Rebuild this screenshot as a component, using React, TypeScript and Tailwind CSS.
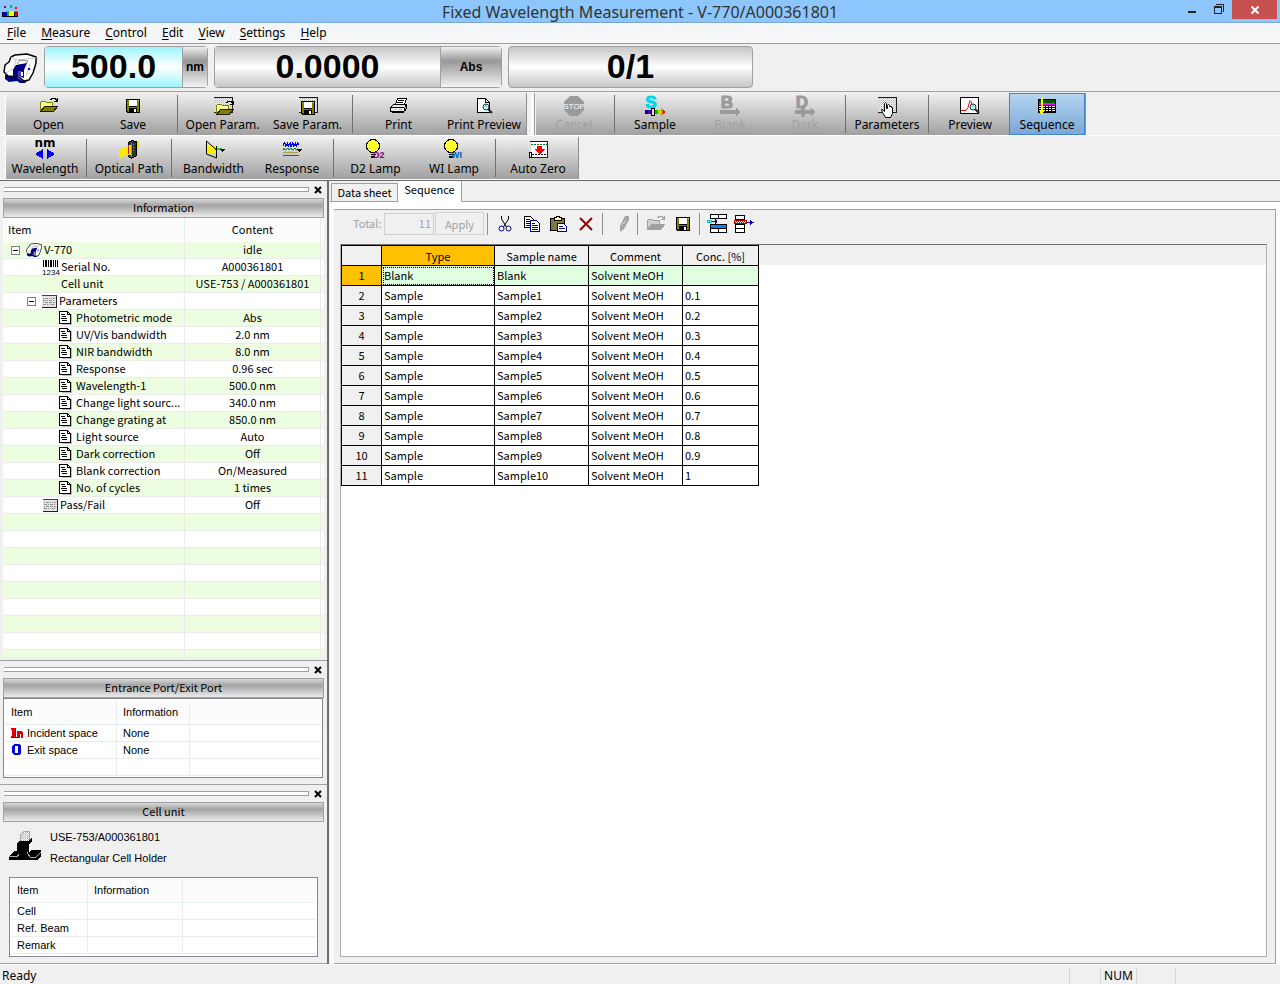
import React from 'react';

type IconProps = { children: React.ReactNode; w?: number; h?: number };

const Icon: React.FC<IconProps> = ({ children, w = 20, h = 20 }) => (
  <svg width={w} height={h} viewBox={`0 0 ${w} ${h}`} shapeRendering="crispEdges" className="shrink-0 overflow-visible" aria-hidden="true">
    {children}
  </svg>
);

const Dots: React.FC = () => (
  <defs>
    <pattern id="dots" width="2" height="2" patternUnits="userSpaceOnUse">
      <rect width="2" height="2" fill="#f4f4f4" />
      <rect width="1" height="1" fill="#b0b0b0" />
      <rect x="1" y="1" width="1" height="1" fill="#d0d0d0" />
    </pattern>
  </defs>
);

const FolderShape: React.FC<{ gray?: boolean }> = ({ gray }) => (
  <>
    <path d="M1.5 15.5v-9l1-1h4l1 1h6v4h-8z" fill={gray ? '#d0d0d0' : '#ffff90'} stroke={gray ? '#a0a0a0' : '#808000'} />
    <path d="M1.5 15.5l4-5h13l-4 5z" fill={gray ? '#a0a0a0' : '#808000'} stroke={gray ? '#a0a0a0' : '#1a1a00'} />
    <path d="M11 3.5h1v-1h4v1h1v1h1M18.5 2v4M15 5.5h4" fill="none" stroke={gray ? '#a0a0a0' : '#000'} />
  </>
);

const FloppyShape: React.FC = () => (
  <>
    <path d="M0 0h14v14h-13l-1-1z" fill="#000" />
    <path d="M1 1h2v7h8v-7h2v12h-2v-4h-8v4h-1l-1-1z" fill="#808000" />
    <path d="M3 1h8v6h-8z" fill="#fff" />
    <path d="M8 10h2v3h-2z" fill="#fff" />
    <path d="M12 1h1v1h-1z" fill="#fff" />
  </>
);

const PanelShape: React.FC = () => (
  <>
    <Dots />
    <path d="M1 1h18v15h-18z" fill="url(#dots)" />
    <path d="M1 1h18v1h-18z" fill="#0000f0" />
    <path d="M19 1h1v16h-19v-1h18z" fill="#222" />
  </>
);

const OpenIcon = () => <Icon><FolderShape /></Icon>;

const SaveIcon = () => (
  <Icon><g transform="translate(3 3)"><FloppyShape /></g></Icon>
);

const OpenParamIcon = () => (
  <Icon>
    <PanelShape />
    <g transform="translate(2 3)"><FolderShape /></g>
  </Icon>
);

const SaveParamIcon = () => (
  <Icon>
    <PanelShape />
    <g transform="translate(3 5)"><FloppyShape /></g>
  </Icon>
);

const PrintIcon = () => (
  <Icon>
    <path d="M6.5 8.5l2-6h9l-2 6z" fill="#fff" stroke="#000" />
    <path d="M9 4.5h6M8 6.5h6" stroke="#000" />
    <path d="M1.5 11.5l3-3h13l-2 3zM1.5 11.5h14v4h-14z" fill="#e8e8e8" stroke="#000" />
    <path d="M15.5 11.5l2-3v4l-2 3" fill="#999" stroke="#000" />
    <path d="M10 13h3v1h-3z" fill="#e0d000" />
    <path d="M3.5 15.5v1h11v-1" fill="#fff" stroke="#000" />
  </Icon>
);

const Magnifier: React.FC = () => (
  <g shapeRendering="auto">
    <path d="M14 13l4 4" stroke="#222" strokeWidth="2" />
    <circle cx="12" cy="11" r="3" fill="#c0f4f8" stroke="#333" />
    <path d="M11 10l2 0" stroke="#00c8d8" />
  </g>
);

const PreviewPageIcon = () => (
  <Icon>
    <path d="M3.5 2.5h8l4 4v10h-12z" fill="#fff" stroke="#000" />
    <path d="M11.5 2.5v4h4" fill="none" stroke="#000" />
    <Magnifier />
  </Icon>
);

const StopIcon = () => (
  <Icon w={22} h={22}>
    <path d="M7 1h8l6 6v8l-6 6h-8l-6-6v-8z" fill="#9a9a9a" shapeRendering="auto" />
    <text x="11" y="14" textAnchor="middle" fontFamily="Liberation Sans, sans-serif" fontSize="8" fill="#fff">STOP</text>
  </Icon>
);

const LetterArrowIcon: React.FC<{ letter: string; color: string; rainbow?: boolean; slot?: boolean }> = ({ letter, color, rainbow, slot }) => (
  <Icon w={22} h={22}>
    <text x={rainbow ? 7 : 8} y="13" textAnchor="middle" fontFamily="Liberation Sans, sans-serif" fontSize="17" fontWeight="bold" fill={color} stroke={color}>{letter}</text>
    {rainbow ? (
      <>
        <path d="M1 15h3v4h-3z" fill="#000080" />
        <path d="M4 15h3v4h-3z" fill="#6000a0" />
        <path d="M11 15h3v4h-3z" fill="#00c000" />
        <path d="M14 15h3v4h-3z" fill="#b8e000" />
        <path d="M17 13l4 4-4 4z" fill="#ff8000" />
        <path d="M19 15l2 2-2 2z" fill="#e00000" />
        <path d="M7.5 13.5h3v7h-3z" fill="#e0e0e0" stroke="#000" />
      </>
    ) : (
      <>
        <path d="M1 15h16v-2l4 4-4 4v-2h-16z" fill={color} />
        {slot && <path d="M7 13h4v9h-4z" fill={color} />}
      </>
    )}
  </Icon>
);

const ParametersIcon = () => (
  <Icon>
    <PanelShape />
    <path
      d="M7.5 7.5l1-1 1 1v5h1v-3l1-1 1 1v1h2v1h1v6l-2 4h-5l-3-5-1-3h1l2 2z"
      fill="#fff"
      stroke="#000"
      shapeRendering="auto"
    />
  </Icon>
);

const PreviewIcon = () => (
  <Icon>
    <path d="M.5 1.500h18v16h-18z" fill="#fff" stroke="#000" />
    <path d="M1 14.500h5l2-3 2-7 1 1 2 7 4 2" fill="none" stroke="#f00" shapeRendering="auto" />
    <g transform="translate(1 0)"><Magnifier /></g>
  </Icon>
);

const SequenceIcon = () => (
  <Icon>
    <path d="M1 3h18v14h-18z" fill="#000" />
    <path d="M2 4h16v3h-16z" fill="#006000" />
    <path d="M2 7h16v2h-16z" fill="#ff00ff" />
    {[10, 12, 14].map((y) => (
      <path key={y} d={`M2 ${y}h2v1h-2zM5 ${y}h3v1h-3zM9 ${y}h2v1h-2zM12 ${y}h2v1h-2zM15 ${y}h3v1h-3z`} fill="#fff" />
    ))}
    <path d="M4 1h2v13h2l-3 5-3-5h2z" fill="#ffff00" />
  </Icon>
);

const WavelengthIcon = () => (
  <Icon w={22} h={22}>
    <text x="11" y="8" textAnchor="middle" fontFamily="DejaVu Sans, sans-serif" fontSize="12" fontWeight="bold" fill="#000">nm</text>
    <path d="M1 15l8-5v10zM21 15l-8-5v10z" fill="#0000f0" />
  </Icon>
);

const OpticalPathIcon = () => (
  <Icon w={22} h={22}>
    <path d="M1 11l9-4v8l-9 5z" fill="#ffe800" />
    <path d="M16 4l5-2v6l-5 3z" fill="#e8d820" />
    <path d="M10.500 3.500l3-2 5 1v14l-5 3-3-2z" fill="#303030" stroke="#000" />
    <path d="M9 6h4v10h-4z" fill="#ffe800" />
    <path d="M10 6h1v9h-1z" fill="#d02020" />
    <path d="M13 4h1v14h-1zM15 5h1v1h-1zM15 8h1v1h-1zM15 11h1v1h-1z" fill="#888" />
  </Icon>
);

const BandwidthIcon = () => (
  <Icon>
    <path d="M1 7l10-2 2 4-2 4-9 1z" fill="#fff000" />
    <path d="M11 8h7v2h-7z" fill="#20d020" />
    <path d="M2.500 1v13M2.500 1l10 9M12.500 6v12l-10-4" fill="none" stroke="#000" shapeRendering="auto" />
    <path d="M15 9h6l-3 3z" fill="#000" />
  </Icon>
);

const ResponseIcon = () => (
  <Icon>
    <path
      d="M1 3h1v3h-1zM2 2h1v2h-1zM3 3h1v4h-1zM4 4h1v2h-1zM5 2h1v4h-1zM6 4h1v3h-1zM7 3h1v2h-1zM8 2h1v5h-1zM9 4h1v3h-1zM10 2h1v3h-1zM11 3h1v4h-1zM12 4h1v2h-1zM13 2h1v4h-1zM14 4h1v3h-1zM15 2h1v3h-1zM16 3h1v2h-1z"
      fill="#0000f0"
    />
    <path d="M1 10l1-2 1 2 2-1 1-1 1 2 2-2 1 2 2-1 1-1 1 2 2-1" fill="none" stroke="#008020" shapeRendering="auto" />
    <path d="M1 13l2-1 2 1 2-1 2 1 2-1 2 1 3-1" fill="none" stroke="#a09030" shapeRendering="auto" />
    <path d="M1 15h16v1h-16z" fill="#f00" />
    <path d="M15 9h5l-2.500 3z" fill="#000" />
  </Icon>
);

const LampIcon: React.FC<{ tag: string; color: string }> = ({ tag, color }) => (
  <Icon w={22} h={22}>
    <circle cx="8" cy="7" r="6.500" fill="#ffff30" stroke="#000" />
    <path d="M6 13h5v1h-5zM6 15h5v1h-5zM6 17h4v2h-4z" fill="#000" />
    <path d="M6 5h1v1h-1zM9 4h1v1h-1zM8 8h1v1h-1z" fill="#fff" />
    <text x="8" y="19" fontFamily="Liberation Sans, sans-serif" fontSize="9" fontWeight="bold" fill={color}>{tag}</text>
  </Icon>
);

const AutoZeroIcon = () => (
  <Icon>
    <path d="M3 2h16v15h-16z" fill="#fff" />
    <path d="M2 1h17v1h-17z" fill="#0000f0" />
    <path d="M19 1h1v17h-18v-1h17z" fill="#222" />
    <path d="M3 4.500h16" stroke="#008020" strokeDasharray="2 1" />
    <path d="M9 6h5v3h3l-5 5-6-5h3z" fill="#f00" />
    <path d="M4 14.500h15" stroke="#000" strokeDasharray="2 1" />
    <path d="M1.500 12.500h2v5h-2z" fill="#fff" stroke="#000" />
  </Icon>
);

const DeviceIcon: React.FC<{ size: number }> = ({ size }) => (
  <svg width={size} height={size} viewBox="0 0 34 34" className="shrink-0" aria-hidden="true">
    <path d="M2 24l10 1 8 5 6-2-4 4h-5l-3-2-8 1-4-3z" fill="#000080" />
    <path d="M1 21l1-7 4-3 2-5 4-2 12-1 9 3v6l-3 10-4 7-5 1-5-4-11-1z" fill="#fff" stroke="#000" strokeWidth="1.500" strokeLinejoin="round" />
    <path d="M8 6l5 3-2 8-8 5M13 9l10-1 10-1M27 13l-4 12" fill="none" stroke="#c4c4c4" />
    <path d="M14 13l3-4 8 1-2 3" fill="none" stroke="#888" />
    <path d="M13 14l11-2-3 7v8l-5-2-6 1v-7z" fill="#000080" />
    <path d="M15 20h4v3l-4 3z" fill="#4040c0" />
    <path d="M18 21h2v4h-2z" fill="#fff" />
    <path d="M25 17h2v2h-2z" fill="#0000ff" />
  </svg>
);

const AppIcon = () => (
  <Icon w={16} h={16}>
    <path d="M2 2h2v2h-2z" fill="#800080" />
    <path d="M8 1h2v3h-2z" fill="#00d000" />
    <path d="M13 3h2v2h-2z" fill="#f00" />
    <path d="M0 8h16v5h-16z" fill="#000" />
    <path d="M1 8h4v4h-4z" fill="#0000d0" />
    <path d="M5 7h3v5h-3z" fill="#00c020" />
    <path d="M7 7h5v5h-5z" fill="#ff0" />
    <path d="M13 7h2v5h-2z" fill="#f00" />
  </Icon>
);

const DocIcon = () => (
  <Icon w={13} h={14}>
    <path d="M3 3h10v11h-10z" fill="#bbb" />
    <path d="M.5.500h8l3 3v9h-11z" fill="#fff" stroke="#000" />
    <path d="M8.500.500v3h3M2 3.500h4M3 5.500h4M2 7.500h6M3 9.500h5" fill="none" stroke="#000" />
  </Icon>
);

const GridIcon = () => (
  <Icon w={15} h={13}>
    <Dots />
    <path d="M0 1h14v11h-14z" fill="#e4e4e4" />
    <path d="M1 3h1v1h-1zM3 3h3v1h-3zM7 3h1v1h-1zM9 3h1v1h-1zM11 3h2v1h-2zM1 5h3v1h-3zM5 5h1v1h-1zM7 5h3v1h-3zM11 5h1v1h-1zM1 7h1v1h-1zM3 7h3v1h-3zM7 7h3v1h-3zM11 7h2v1h-2zM1 9h3v1h-3zM5 9h1v1h-1zM7 9h1v1h-1zM9 9h3v1h-3z" fill="#909090" />
    <path d="M0 0h15v1h-15z" fill="#3030d0" />
    <path d="M14 1h1v12h-15v-1h14z" fill="#222" />
  </Icon>
);

const BarcodeIcon = () => (
  <Icon w={16} h={15}>
    <path d="M0 0h1v7h-1zM2 0h2v7h-2zM5 0h1v7h-1zM7 0h2v7h-2zM10 0h1v7h-1zM12 0h1v7h-1zM14 0h1v7h-1z" fill="#000" />
    <text x="8" y="15" textAnchor="middle" fontFamily="Liberation Sans, sans-serif" fontSize="8" fill="#000">1234</text>
  </Icon>
);

const CellHolderIcon = () => (
  <Icon w={33} h={32}>
    <Dots />
    <path d="M11.500 4.500l3-3h6v10h-9z" fill="url(#dots)" stroke="#aaa" />
    <path d="M0 26l5-5h3v-8l2-2h9l3-3h1v12h9v6l-4 4h-28z" fill="#000" />
    <path d="M20 14l3-3v8l-3 3z" fill="#fff" />
    <path d="M0 26.500h8l2-2M18 22l3 5h6l5-5" fill="none" stroke="#aaa" />
  </Icon>
);

const CutIcon = () => (
  <Icon w={16} h={18}>
    <path d="M4.500 1v3l5 8M11.500 1v3l-5 8" fill="none" stroke="#000" shapeRendering="auto" />
    <circle cx="4.500" cy="13.500" r="2.500" fill="none" stroke="#000080" shapeRendering="auto" />
    <circle cx="11.500" cy="13.500" r="2.500" fill="none" stroke="#000080" shapeRendering="auto" />
  </Icon>
);

const CopyIcon = () => (
  <Icon w={16} h={16}>
    <path d="M.5.500h6l3 3v8h-9z" fill="#fff" stroke="#000" />
    <path d="M2 3.500h4M2 5.500h5M2 7.500h5M2 9.500h5" stroke="#000" />
    <path d="M6.500 4.500h6l3 3v8h-9z" fill="#fff" stroke="#000080" />
    <path d="M8 7.500h3M8 9.500h6M8 11.500h6M8 13.500h6" stroke="#000080" />
  </Icon>
);

const PasteIcon = () => (
  <Icon w={17} h={16}>
    <path d="M.5 2.500h14v12h-14z" fill="#807840" stroke="#000" />
    <path d="M4.500 1.500h2v-1h3v1h2v3h-7z" fill="#ffff80" stroke="#000" />
    <path d="M7.500 7.500h6l3 3v5h-9z" fill="#fff" stroke="#000080" />
    <path d="M9 10.500h4M9 12.500h6" stroke="#000080" />
  </Icon>
);

const DeleteIcon = () => (
  <Icon w={14} h={14}>
    <path d="M1 1l12 12M13 1l-12 12" stroke="#900000" strokeWidth="2" shapeRendering="auto" />
  </Icon>
);

const PencilIcon = () => (
  <Icon w={12} h={16}>
    <path d="M7 0h4v4l-5 9-4 3v-6z" fill="#a4a4a4" shapeRendering="auto" />
    <path d="M8 4l-4 7" stroke="#e8e8e8" strokeDasharray="1 1" />
  </Icon>
);

const InsertRowIcon = () => (
  <Icon w={20} h={19}>
    <path d="M3 0h17v5h-17zM3 10h17v9h-17z" fill="#000" />
    <path d="M4 1h7v3h-7zM12 1h7v3h-7zM4 15h7v3h-7zM12 15h7v3h-7z" fill="#fff" />
    <path d="M4 11h15v3h-15z" fill="#2080e0" />
    <path d="M0 6h5v3h-5z" fill="#00c8c8" />
    <path d="M1 7h1v1h-1zM3 7h1v1h-1z" fill="#fff" />
    <path d="M5 7h5v1h-5zM8 5h1v5h-1zM9 6h1v3h-1z" fill="#0000a0" />
    <path d="M12 7h7v1h-7z" fill="#fff" />
  </Icon>
);

const RemoveRowIcon = () => (
  <Icon w={20} h={18}>
    <path d="M1 0h10v5h-10zM1 9h10v9h-10z" fill="#000" />
    <path d="M2 1h8v3h-8zM2 10h8v3h-8zM2 14h8v3h-8z" fill="#fff" />
    <path d="M0 5h13v4h-13z" fill="#c00000" />
    <path d="M1 6h1v1h-1zM3 6h1v1h-1zM5 6h1v1h-1zM7 6h1v1h-1zM9 6h1v1h-1zM11 6h1v1h-1zM2 7h1v1h-1zM4 7h1v1h-1zM6 7h1v1h-1zM8 7h1v1h-1zM10 7h1v1h-1z" fill="#fff" />
    <path d="M13 7h7v1h-7zM16 5h1v5h-1zM17 6h1v3h-1z" fill="#0000a0" />
  </Icon>
);

const Grip: React.FC = () => (
  <div className="flex w-[9px] shrink-0 gap-px pl-1">
    <div className="w-0.5 bg-white" />
    <div className="w-px bg-[#a0a0a0]" />
  </div>
);

const Sep: React.FC = () => (
  <div className="flex w-[5px] shrink-0 justify-center py-0.5">
    <div className="w-px bg-[#707070]" />
  </div>
);

type ToolProps = { label: string; icon: React.ReactNode; width: string; disabled?: boolean; active?: boolean };

const Tool: React.FC<ToolProps> = ({ label, icon, width, disabled, active }) => (
  <button
    type="button"
    disabled={disabled}
    aria-pressed={active}
    className={`flex h-[42px] ${width} shrink-0 flex-col items-center whitespace-nowrap border pt-px ${
      active ? 'border-[#3d87d0] bg-linear-to-b from-[#b4d4f2] to-[#7ba7d4]' : 'border-transparent'
    } ${disabled ? 'text-[#a2a2a2]' : 'text-black'}`}
  >
    <span className="flex h-[22px] items-center">{icon}</span>
    <span className="text-xs leading-4">{label}</span>
  </button>
);

const Bar: React.FC<{ children: React.ReactNode }> = ({ children }) => (
  <div className="flex border-r border-[#909090] bg-linear-to-b from-[#f0f0f0] to-[#a0a0a0]">{children}</div>
);

const Toolbars: React.FC = () => (
  <div className="border-b border-[#696969] bg-[#f0f0f0]">
    <div className="flex border-b border-white pl-px pt-px">
      <Grip />
      <div className="-ml-1 flex">
        <Bar>
          <Tool label="Open" icon={<OpenIcon />} width="w-[85px]" />
          <Tool label="Save" icon={<SaveIcon />} width="w-[84px]" />
          <Sep />
          <Tool label="Open Param." icon={<OpenParamIcon />} width="w-[85px]" />
          <Tool label="Save Param." icon={<SaveParamIcon />} width="w-[85px]" />
          <Sep />
          <Tool label="Print" icon={<PrintIcon />} width="w-[87px]" />
          <Tool label="Print Preview" icon={<PreviewPageIcon />} width="w-[84px]" />
        </Bar>
        <Grip />
        <Bar>
          <Tool label="Cancel" icon={<StopIcon />} width="w-[76px]" disabled />
          <Sep />
          <Tool label="Sample" icon={<LetterArrowIcon letter="S" color="#00d8e8" rainbow />} width="w-[76px]" />
          <Tool label="Blank" icon={<LetterArrowIcon letter="B" color="#9a9a9a" />} width="w-[74px]" disabled />
          <Tool label="Dark" icon={<LetterArrowIcon letter="D" color="#9a9a9a" slot />} width="w-[76px]" disabled />
          <Sep />
          <Tool label="Parameters" icon={<ParametersIcon />} width="w-[78px]" />
          <Sep />
          <Tool label="Preview" icon={<PreviewIcon />} width="w-[78px]" />
          <Tool label="Sequence" icon={<SequenceIcon />} width="w-[76px]" active />
        </Bar>
      </div>
    </div>
    <div className="flex border-b border-white pl-px pt-px">
      <Grip />
      <div className="-ml-1 flex">
        <Bar>
          <Tool label="Wavelength" icon={<WavelengthIcon />} width="w-[78px]" />
          <Sep />
          <Tool label="Optical Path" icon={<OpticalPathIcon />} width="w-[80px]" />
          <Sep />
          <Tool label="Bandwidth" icon={<BandwidthIcon />} width="w-[79px]" />
          <Tool label="Response" icon={<ResponseIcon />} width="w-[78px]" />
          <Sep />
          <Tool label="D2 Lamp" icon={<LampIcon tag="D2" color="#800080" />} width="w-[79px]" />
          <Tool label="WI Lamp" icon={<LampIcon tag="WI" color="#0060c0" />} width="w-[78px]" />
          <Sep />
          <Tool label="Auto Zero" icon={<AutoZeroIcon />} width="w-[80px]" />
        </Bar>
      </div>
    </div>
  </div>
);

const menus = ['File', 'Measure', 'Control', 'Edit', 'View', 'Settings', 'Help'];

const TitleBar: React.FC = () => (
  <header className="grid h-[23px] grid-cols-[1fr_auto_1fr] border-b border-[#7aa6d4] bg-[#8cc6fc]">
    <div className="pl-0.5 pt-1"><AppIcon /></div>
    <h1 className="pt-0.5 text-base leading-5 text-[#333]">Fixed Wavelength Measurement - V-770/A000361801</h1>
    <div className="flex items-start justify-end pr-[3px]">
      <button type="button" aria-label="Minimize" className="flex h-[18px] w-[27px] items-start justify-center pt-[11px]">
        <span className="h-0.5 w-2 bg-[#222]" />
      </button>
      <button type="button" aria-label="Restore" className="flex h-[18px] w-[27px] justify-center pt-1">
        <Icon w={10} h={10}>
          <path d="M2 0h8v8h-1v-7h-7zM0 2h8v8h-8zM1 4v5h6v-5z" fill="#222" fillRule="evenodd" />
        </Icon>
      </button>
      <button type="button" aria-label="Close" className="flex h-[19px] w-[45px] items-center justify-center bg-[#c75050]">
        <Icon w={8} h={8}>
          <path d="M.5.500l7 7M7.500.500l-7 7" stroke="#fff" strokeWidth="2" shapeRendering="auto" />
        </Icon>
      </button>
    </div>
  </header>
);

const MenuBar: React.FC = () => (
  <nav className="flex h-[21px] gap-[15px] border-b border-[#9d9d98] bg-[#f5f6f7] pl-[7px] text-xs leading-5 text-black">
    {menus.map((m) => (
      <button key={m} type="button" className="leading-5">
        <span className="underline underline-offset-2">{m[0]}</span>{m.slice(1)}
      </button>
    ))}
  </nav>
);

const unitBg = 'bg-linear-to-b from-[#f0f0f0] via-[#989898] via-35% to-[#f4f4f4]';
const valueBg = 'bg-linear-to-b from-[#c6c6c6] via-white to-[#c6c6c6]';

const Readouts: React.FC = () => (
  <div className="flex h-12 items-start gap-1.5 border-b border-[#a0a0a0] bg-[#f0f0f0] pl-[3px] pt-0.5 font-['Liberation_Sans',Arial,sans-serif] font-bold text-black">
    <div className="-mr-px flex h-11 w-9 items-center"><DeviceIcon size={34} /></div>
    <div className="flex h-[42px] w-[164px] rounded-sm border border-[#a0a0a0]">
      <div className="flex-1 bg-linear-to-b from-[#98f4fc] via-white to-[#98f4fc] text-center text-[34px] leading-[38px]">500.0</div>
      <div className={`w-[25px] border-l border-[#a0a0a0] text-center text-xs leading-10 ${unitBg}`}>nm</div>
    </div>
    <div className="flex h-[42px] w-[288px] rounded-sm border border-[#a0a0a0]">
      <div className={`flex-1 text-center text-[34px] leading-[38px] ${valueBg}`}>0.0000</div>
      <div className={`w-[61px] border-l border-[#a0a0a0] text-center text-xs leading-10 ${unitBg}`}>Abs</div>
    </div>
    <div className={`h-[42px] w-[245px] rounded-sm border border-[#a0a0a0] text-center text-[34px] leading-[38px] ${valueBg}`}>0/1</div>
  </div>
);

type InfoRow = { label: string; value: string; indent: string; icon?: React.ReactNode; open?: boolean };

const infoRows: InfoRow[] = [
  { label: 'V-770', value: 'idle', indent: 'pl-2', icon: <DeviceIcon size={16} />, open: true },
  { label: 'Serial No.', value: 'A000361801', indent: 'pl-10', icon: <BarcodeIcon /> },
  { label: 'Cell unit', value: 'USE-753 / A000361801', indent: 'pl-14' },
  { label: 'Parameters', value: '', indent: 'pl-6', icon: <GridIcon />, open: true },
  { label: 'Photometric mode', value: 'Abs', indent: 'pl-14', icon: <DocIcon /> },
  { label: 'UV/Vis bandwidth', value: '2.0 nm', indent: 'pl-14', icon: <DocIcon /> },
  { label: 'NIR bandwidth', value: '8.0 nm', indent: 'pl-14', icon: <DocIcon /> },
  { label: 'Response', value: '0.96 sec', indent: 'pl-14', icon: <DocIcon /> },
  { label: 'Wavelength-1', value: '500.0 nm', indent: 'pl-14', icon: <DocIcon /> },
  { label: 'Change light sourc...', value: '340.0 nm', indent: 'pl-14', icon: <DocIcon /> },
  { label: 'Change grating at', value: '850.0 nm', indent: 'pl-14', icon: <DocIcon /> },
  { label: 'Light source', value: 'Auto', indent: 'pl-14', icon: <DocIcon /> },
  { label: 'Dark correction', value: 'Off', indent: 'pl-14', icon: <DocIcon /> },
  { label: 'Blank correction', value: 'On/Measured', indent: 'pl-14', icon: <DocIcon /> },
  { label: 'No. of cycles', value: '1 times', indent: 'pl-14', icon: <DocIcon /> },
  { label: 'Pass/Fail', value: 'Off', indent: 'pl-10', icon: <GridIcon /> },
];

const emptyRows = [0, 1, 2, 3, 4, 5, 6, 7];

const DockHeader: React.FC<{ title: string }> = ({ title }) => (
  <>
    <div className="flex h-[17px] items-center gap-1 pl-1 pr-1">
      <div className="h-[5px] flex-1 border-y border-r border-[#a0a0a0] bg-white" />
      <button type="button" aria-label={`Close ${title}`} className="flex size-2.5 items-center justify-center">
        <Icon w={6} h={6}>
          <path d="M0 0l6 6M6 0l-6 6" stroke="#000" strokeWidth="2" shapeRendering="auto" />
        </Icon>
      </button>
    </div>
    <h2 className="mx-[3px] h-5 border border-[#a0a0a0] bg-linear-to-b from-[#d8d8d8] via-[#a4a4a4] via-35% to-[#ececec] text-center font-['Noto_Sans_CJK_JP',sans-serif] text-[11px] leading-4">
      {title}
    </h2>
  </>
);

const InformationDock: React.FC = () => (
  <section className="flex flex-1 flex-col border-b border-[#a0a0a0] pb-[3px]">
    <DockHeader title="Information" />
    <div className="mx-[3px] flex flex-1 flex-col bg-white font-['Noto_Sans_CJK_JP',sans-serif] text-[11px]">
      <table className="w-full table-fixed border-separate border-spacing-0">
        <colgroup>
          <col className="w-[182px]" />
          <col />
          <col className="w-[3px]" />
        </colgroup>
        <thead>
          <tr className="h-6 bg-[#fcfcfc]">
            <th className="border-r border-[#e4ecf8] p-0 pb-0.5 pl-[5px] text-left font-normal leading-4">Item</th>
            <th className="border-r border-[#e4ecf8] p-0 pb-0.5 font-normal leading-4">Content</th>
            <td className="p-0" />
          </tr>
        </thead>
        <tbody>
          {infoRows.map((row) => (
            <tr key={row.label} className="h-[17px] odd:bg-[#edfddf]">
              <td className="border-b border-r border-[#ececec] p-0">
                <div className={`flex h-4 items-center whitespace-nowrap leading-[14px] ${row.indent}`}>
                  {row.open && (
                    <button type="button" aria-label={`Collapse ${row.label}`} className="mr-1.5 flex size-[9px] shrink-0 items-center justify-center border border-[#808080] bg-white">
                      <span className="h-px w-[5px] bg-black" />
                    </button>
                  )}
                  {row.icon}
                  <span className={`pb-0.5 ${row.indent === 'pl-14' && row.icon ? 'pl-1' : 'pl-0.5'}`}>{row.label}</span>
                </div>
              </td>
              <td className="border-b border-r border-[#ececec] p-0 pb-0.5 text-center leading-[14px]">{row.value}</td>
              <td className="border-b border-[#ececec] p-0" />
            </tr>
          ))}
          {emptyRows.map((n) => (
            <tr key={n} className="h-[17px] odd:bg-[#edfddf]">
              <td className="border-b border-r border-[#ececec] p-0" />
              <td className="border-b border-r border-[#ececec] p-0" />
              <td className="border-b border-[#ececec] p-0" />
            </tr>
          ))}
        </tbody>
      </table>
      <div className="flex flex-1 bg-[#edfddf]">
        <div className="w-[182px] border-r border-[#ececec]" />
        <div className="mr-[3px] flex-1 border-r border-[#ececec]" />
      </div>
    </div>
  </section>
);

type PairTableProps = { first: string; second: string; rows: { icon?: React.ReactNode; label: string; value: string }[] };

const PairTable: React.FC<PairTableProps> = ({ first, second, rows }) => (
  <table className="w-full table-fixed border-separate border-spacing-0">
    <colgroup>
      <col className={first} />
      <col className={second} />
      <col />
    </colgroup>
    <thead>
      <tr className="h-6 bg-[#fcfcfc]">
        <th className="border-b border-r border-[#e4ecf8] p-0 pl-1.5 text-left font-normal">Item</th>
        <th className="border-b border-r border-[#e4ecf8] p-0 pl-1.5 text-left font-normal">Information</th>
        <td className="border-b border-[#e4ecf8] p-0" />
      </tr>
    </thead>
    <tbody>
      {rows.map((row, i) => (
        <tr key={i} className="h-[17px]">
          <td className="border-b border-r border-[#ececec] p-0 pl-1.5">
            <div className="flex h-4 items-center gap-1 leading-4">{row.icon}<span>{row.label}</span></div>
          </td>
          <td className="border-b border-r border-[#ececec] p-0 pl-1.5 leading-4">{row.value}</td>
          <td className="border-b border-[#ececec] p-0" />
        </tr>
      ))}
    </tbody>
  </table>
);

const InIcon = () => (
  <Icon w={12} h={12}>
    <path d="M0 1h5v2h-1v6h1v2h-5v-2h1v-6h-1zM6 4h5l1 2v5h-2v-4h-2v4h-2z" fill="#e00000" />
    <path d="M4 3h1v6h-1zM0 10h6v1h-6zM8 7h1v4h-1z" fill="#800000" />
  </Icon>
);

const OutIcon = () => (
  <Icon w={12} h={12}>
    <path d="M3 0h5l2 2v7l-2 2h-5l-2-2v-7zM4 2v7h3v-7z" fill="#0000e0" fillRule="evenodd" />
  </Icon>
);

const LeftPane: React.FC = () => (
  <aside className="flex w-[329px] shrink-0 flex-col border-r-2 border-[#707070] bg-[#f0f0f0] font-['Liberation_Sans',Arial,sans-serif] text-[11px] text-black">
    <InformationDock />
    <section className="border-b border-[#a0a0a0] pb-1.5">
      <DockHeader title="Entrance Port/Exit Port" />
      <div className="ml-[3px] mr-1 h-20 border border-[#828790] bg-white p-px pt-0.5">
        <PairTable
          first="w-28"
          second="w-[73px]"
          rows={[
            { icon: <InIcon />, label: 'Incident space', value: 'None' },
            { icon: <OutIcon />, label: 'Exit space', value: 'None' },
            { label: '', value: '' },
          ]}
        />
      </div>
    </section>
    <section className="border-b border-[#a0a0a0] pb-1.5">
      <DockHeader title="Cell unit" />
      <div className="flex items-start gap-2 pl-[9px] pt-2">
        <CellHolderIcon />
        <div>
          <p className="leading-[14px]">USE-753/A000361801</p>
          <p className="pt-[7px] leading-[14px]">Rectangular Cell Holder</p>
        </div>
      </div>
      <div className="ml-[9px] mr-[9px] mt-3 h-20 border border-[#828790] bg-white p-px">
        <PairTable
          first="w-[77px]"
          second="w-[95px]"
          rows={[
            { label: 'Cell', value: '' },
            { label: 'Ref. Beam', value: '' },
            { label: 'Remark', value: '' },
          ]}
        />
      </div>
    </section>
  </aside>
);

const sequence = [
  ['Blank', 'Blank', ''],
  ['Sample', 'Sample1', '0.1'],
  ['Sample', 'Sample2', '0.2'],
  ['Sample', 'Sample3', '0.3'],
  ['Sample', 'Sample4', '0.4'],
  ['Sample', 'Sample5', '0.5'],
  ['Sample', 'Sample6', '0.6'],
  ['Sample', 'Sample7', '0.7'],
  ['Sample', 'Sample8', '0.8'],
  ['Sample', 'Sample9', '0.9'],
  ['Sample', 'Sample10', '1'],
];

const cell = 'border border-black p-0 pb-0.5 pl-0.5';

const SequenceTable: React.FC = () => (
  <table className="w-[418px] table-fixed border-collapse text-left leading-4">
    <colgroup>
      <col className="w-10" />
      <col className="w-[113px]" />
      <col className="w-[94px]" />
      <col className="w-[94px]" />
      <col className="w-[76px]" />
    </colgroup>
    <thead>
      <tr className="h-5 bg-[#f0f0f0] text-center">
        <td className="border border-black p-0" />
        <th className="border border-black bg-[#ffc000] p-0 font-normal">Type</th>
        <th className="border border-black p-0 font-normal">Sample name</th>
        <th className="border border-black p-0 font-normal">Comment</th>
        <th className="border border-black p-0 font-normal">Conc. [%]</th>
      </tr>
    </thead>
    <tbody>
      {sequence.map(([type, name, conc], i) => (
        <tr key={name} className={`h-5 ${i === 0 ? 'bg-[#e0fee0]' : 'bg-white'}`}>
          <th className={`border border-black p-0 pb-0.5 text-center font-normal ${i === 0 ? 'bg-[#ffc000]' : 'bg-[#f0f0f0]'}`}>{i + 1}</th>
          <td className={`${cell} ${i === 0 ? 'outline-1 -outline-offset-2 outline-dotted outline-black' : ''}`}>{type}</td>
          <td className={cell}>{name}</td>
          <td className={cell}>Solvent MeOH</td>
          <td className={cell}>{conc}</td>
        </tr>
      ))}
    </tbody>
  </table>
);

const EditTool: React.FC<{ label: string; children: React.ReactNode; disabled?: boolean }> = ({ label, children, disabled }) => (
  <button type="button" aria-label={label} disabled={disabled} className="flex h-6 w-[27px] items-center justify-center">
    {children}
  </button>
);

const EditSep: React.FC = () => <div className="mx-[3px] h-[22px] w-px bg-[#909090]" />;

const MainPane: React.FC = () => (
  <main className="flex min-w-0 flex-1 flex-col bg-[#f0f0f0] pl-px font-['Noto_Sans_CJK_JP',sans-serif] text-[11px] text-black">
    <div className="flex h-[21px] items-end border-b border-[#a0a0a0]" role="tablist">
      <button type="button" role="tab" aria-selected="false" className="ml-px h-[18px] w-[67px] border border-b-0 border-[#a0a0a0] pb-0.5 leading-[14px]">
        Data sheet
      </button>
      <button type="button" role="tab" aria-selected="true" className="-mb-px h-[21px] w-16 border border-l-0 border-t-0 border-[#a0a0a0] border-b-white bg-white pb-1 leading-4">
        Sequence
      </button>
    </div>
    <div className="flex flex-1 flex-col bg-white pl-1 pr-1 pt-[7px]">
      <div className="flex flex-1 flex-col border-b border-r border-t border-[#a0a0a0] bg-[#f0f0f0] pb-1.5 pl-1.5 pr-2">
        <div className="flex h-[34px] items-center pb-[7px] pl-[13px] text-[#a0a0a0]">
          <label htmlFor="total" className="w-[31px]">Total:</label>
          <input id="total" defaultValue="11" disabled className="h-[22px] w-[50px] border border-[#d0d0d0] bg-[#f0f0f0] pb-0.5 pr-0.5 text-right" />
          <button type="button" disabled className="ml-px h-[23px] w-[49px] border border-[#d4d4d4] leading-5">Apply</button>
          <EditSep />
          <EditTool label="Cut"><CutIcon /></EditTool>
          <EditTool label="Copy"><CopyIcon /></EditTool>
          <EditTool label="Paste"><PasteIcon /></EditTool>
          <EditTool label="Delete"><DeleteIcon /></EditTool>
          <EditSep />
          <div className="w-1" />
          <EditTool label="Edit" disabled><PencilIcon /></EditTool>
          <div className="h-[22px] w-px bg-[#909090]" />
          <div className="w-1" />
          <EditTool label="Open" disabled><Icon><FolderShape gray /></Icon></EditTool>
          <EditTool label="Save"><Icon w={14} h={14}><FloppyShape /></Icon></EditTool>
          <EditSep />
          <EditTool label="Insert row"><InsertRowIcon /></EditTool>
          <EditTool label="Remove row"><RemoveRowIcon /></EditTool>
        </div>
        <div className="flex flex-1 flex-col border border-[#b0b0b0] border-t-[#707070] bg-white">
          <div className="flex">
            <SequenceTable />
            <div className="h-5 flex-1 bg-[#f0f0f0]" />
          </div>
        </div>
      </div>
    </div>
  </main>
);

const StatusBar: React.FC = () => (
  <footer className="flex h-5 items-center border-t border-white bg-[#f0f0f0] pl-0.5 pt-0.5 text-xs leading-4 text-black">
    <span className="flex-1">Ready</span>
    <span className="h-4 w-[31px] border-l border-[#d4d4d4]" />
    <span className="h-4 w-9 border-l border-[#d4d4d4] text-center">NUM</span>
    <span className="h-4 w-[39px] border-l border-[#d4d4d4]" />
    <span className="h-4 w-[105px] border-l border-[#d4d4d4]" />
  </footer>
);

const App: React.FC = () => (
  <div className="flex min-h-screen flex-col bg-[#f0f0f0] font-['Noto_Sans',sans-serif]">
    <TitleBar />
    <MenuBar />
    <Readouts />
    <Toolbars />
    <div className="flex flex-1">
      <LeftPane />
      <MainPane />
    </div>
    <StatusBar />
  </div>
);

export default App;
